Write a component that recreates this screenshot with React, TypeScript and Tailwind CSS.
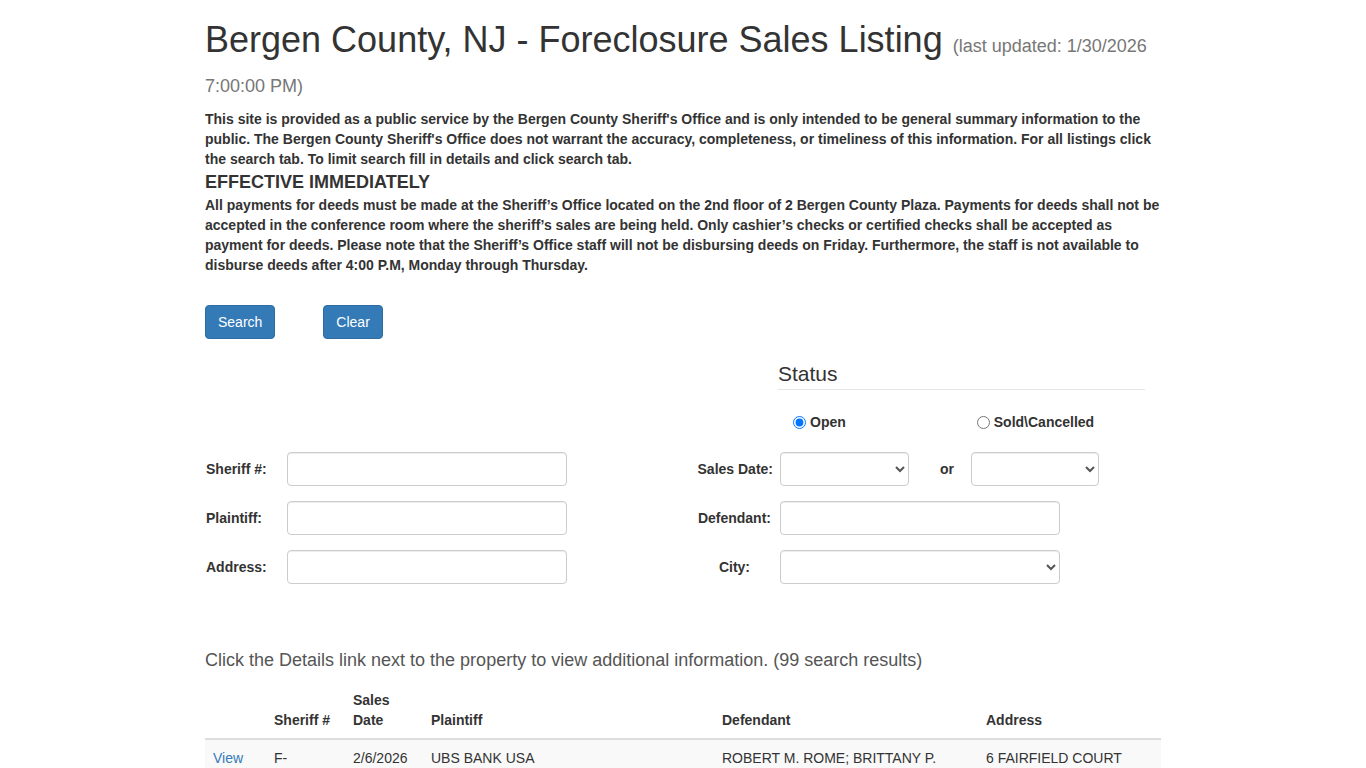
import type { ReactNode } from "react";

const inputCls =
  "h-[34px] rounded-[4px] border border-[#ccc] bg-white px-3 text-[14px] text-[#555] shadow-[inset_0_1px_1px_rgba(0,0,0,0.075)] outline-none";

function Label({ children, className = "" }: { children: ReactNode; className?: string }) {
  return <label className={`text-[14px] font-bold text-[#333] ${className}`}>{children}</label>;
}

export default function App() {
  return (
    <div className="min-h-screen bg-white font-['Liberation_Sans',Arial,sans-serif] text-[14px] text-[#333]">
      <div className="mx-auto w-[986px] px-[15px]">
        <h1 className="mb-[9px] pt-[20px] text-[36px] font-normal leading-[40px] text-[#333]">
          Bergen County, NJ - Foreclosure Sales Listing{" "}
          <small className="text-[18px] leading-none text-[#777]">(last updated: 1/30/2026 7:00:00 PM)</small>
        </h1>

        <p className="text-[14px] font-bold leading-[20px]">
          This site is provided as a public service by the Bergen County Sheriff's Office and is only intended to be
          general summary information to the public. The Bergen County Sheriff's Office does not warrant the accuracy,
          completeness, or timeliness of this information. For all listings click the search tab. To limit search fill
          in details and click search tab.
        </p>
        <h4 className="text-[18px] font-bold leading-[26px]">EFFECTIVE IMMEDIATELY</h4>
        <p className="text-[14px] font-bold leading-[20px]">
          All payments for deeds must be made at the Sheriff’s Office located on the 2nd floor of 2 Bergen County Plaza.
          Payments for deeds shall not be accepted in the conference room where the sheriff’s sales are being held. Only
          cashier’s checks or certified checks shall be accepted as payment for deeds. Please note that the Sheriff’s
          Office staff will not be disbursing deeds on Friday. Furthermore, the staff is not available to disburse deeds
          after 4:00 P.M, Monday through Thursday.
        </p>

        <div className="mt-[30px] flex gap-[48px]">
          <button className="h-[34px] rounded-[4px] border border-[#2e6da4] bg-[#337ab7] px-3 text-[14px] text-white">
            Search
          </button>
          <button className="h-[34px] rounded-[4px] border border-[#2e6da4] bg-[#337ab7] px-3 text-[14px] text-white">
            Clear
          </button>
        </div>

        <div className="mt-[23px] ml-[573px] w-[367px]">
          <h3 className="border-b border-[#e5e5e5] pb-[3px] text-[21px] leading-[24px]">Status</h3>
          <div className="mt-[22px] flex h-[20px] items-center text-[14px] font-bold">
            <label className="ml-[15px] flex items-center gap-[4px]">
              <input type="radio" name="status" defaultChecked className="m-0 size-[13px]" />
              Open
            </label>
            <label className="ml-[131px] flex items-center gap-[4px]">
              <input type="radio" name="status" className="m-0 size-[13px]" />
              Sold\Cancelled
            </label>
          </div>
        </div>

        <div className="mt-[20px] flex flex-col gap-[15px]">
          <div className="flex items-center">
            <Label className="w-[82px] pl-px">Sheriff #:</Label>
            <input className={`${inputCls} w-[280px]`} />
            <Label className="ml-[123px] w-[83px] text-right">Sales Date:</Label>
            <select className={`${inputCls} ml-[7px] w-[129px] px-2`}>
              <option></option>
            </select>
            <span className="ml-[31px] text-[14px] font-bold">or</span>
            <select className={`${inputCls} ml-[17px] w-[128px] px-2`}>
              <option></option>
            </select>
          </div>
          <div className="flex items-center">
            <Label className="w-[82px] pl-px">Plaintiff:</Label>
            <input className={`${inputCls} w-[280px]`} />
            <Label className="ml-[123px] w-[81px] text-right">Defendant:</Label>
            <input className={`${inputCls} ml-[9px] w-[280px]`} />
          </div>
          <div className="flex items-center">
            <Label className="w-[82px] pl-px">Address:</Label>
            <input className={`${inputCls} w-[280px]`} />
            <Label className="ml-[123px] w-[60px] text-right">City:</Label>
            <select className={`${inputCls} ml-[30px] w-[280px] px-2`}>
              <option></option>
            </select>
          </div>
        </div>

        <p className="mt-[64px] text-[18px] leading-[24px] text-[#555]">
          Click the Details link next to the property to view additional information. (99 search results)
        </p>

        <table className="mt-[10px] w-full border-collapse text-left text-[14px] leading-[20px]">
          <thead>
            <tr className="border-b-2 border-[#ddd] align-bottom font-bold">
              <th className="w-[61px] p-2"></th>
              <th className="w-[79px] p-2">Sheriff #</th>
              <th className="w-[78px] p-2">
                Sales
                <br />
                Date
              </th>
              <th className="w-[291px] p-2">Plaintiff</th>
              <th className="w-[264px] p-2">Defendant</th>
              <th className="p-2">Address</th>
            </tr>
          </thead>
          <tbody>
            <tr className="bg-[#f9f9f9] align-top">
              <td className="p-2">
                <a href="#" className="text-[#337ab7]">
                  View
                </a>
              </td>
              <td className="p-2">
                F-
                <br />
                25001244
              </td>
              <td className="p-2">2/6/2026</td>
              <td className="p-2">UBS BANK USA</td>
              <td className="p-2">
                ROBERT M. ROME; BRITTANY P.
                <br />
                ROME
              </td>
              <td className="p-2">
                6 FAIRFIELD COURT
                <br />
                MAHWAH
              </td>
            </tr>
          </tbody>
        </table>
      </div>
    </div>
  );
}
